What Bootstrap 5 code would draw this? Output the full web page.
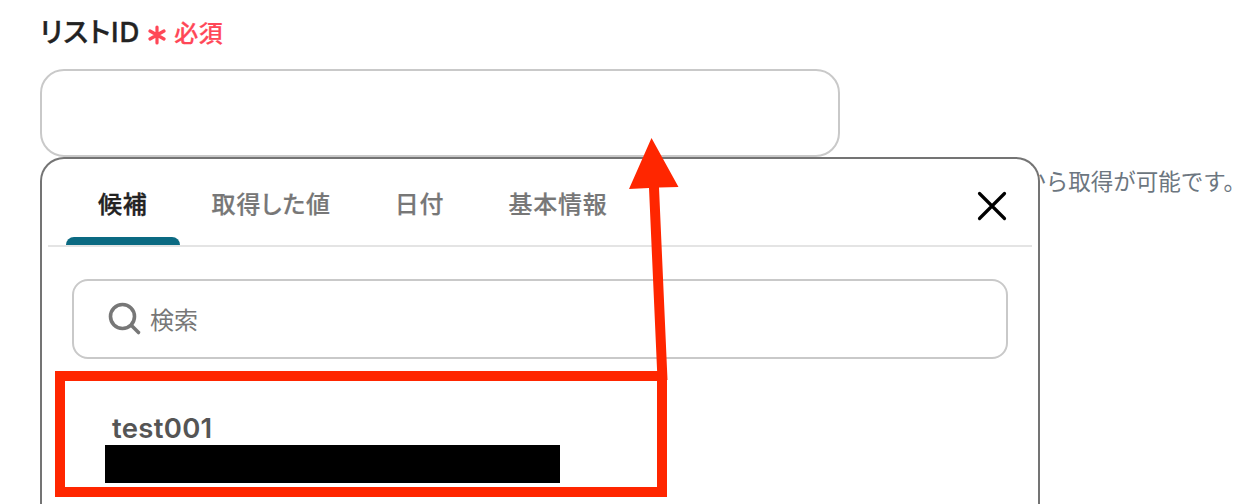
<!DOCTYPE html>
<html lang="ja">

<head>
    <meta charset="UTF-8">
    <meta name="viewport" content="width=device-width, initial-scale=1.0">
    <title>リストID</title>
    <link href="https://cdn.jsdelivr.net/npm/bootstrap@5.3.3/dist/css/bootstrap.min.css" rel="stylesheet">
    <style>
        body {
            height: 504px;
            overflow: hidden;
            background-color: #fff;
            color: #222;
            font-family: Inter, "Noto Sans CJK JP", sans-serif;
        }
        .field {
            padding: 12px 12px 0 40px;
        }
        .field-label {
            height: 57px;
            font-size: 27.5px;
            line-height: 41px;
            font-weight: 500;
            letter-spacing: 0.9px;
            font-feature-settings: "palt";
            -webkit-text-stroke: 0.4px currentColor;
        }
        .required {
            color: #ff4757;
            font-size: 24px;
            line-height: 43px;
            letter-spacing: 0.5px;
            margin-left: 8px;
            -webkit-text-stroke: 0.2px currentColor;
        }
        .list-input {
            width: 800px;
            height: 88px;
            border: 2px solid #c9c9c9;
            border-radius: 24px;
        }
        .list-input:focus {
            border-color: #c9c9c9;
            box-shadow: none;
        }
        .hint {
            margin-top: 8px;
            line-height: 33px;
            font-size: 22.5px;
            color: #6c7680;
        }
        .picker {
            top: 157px;
            left: 40px;
            width: 1000px;
            height: 347px;
            border: 2px solid #747474;
            border-bottom: 0;
            border-radius: 24px 24px 0 0;
        }
        .picker-head {
            height: 88px;
            margin: 0 6px;
            padding-left: 18px;
            border-bottom: 2px solid #e4e4e4;
        }
        .picker-tab {
            height: 86px;
            padding: 27px 32px 0;
            border: 0;
            background: none;
            color: #777;
            font-size: 24px;
            line-height: 38px;
            font-weight: 500;
            letter-spacing: 0.8px;
            font-feature-settings: "palt";
            text-align: left;
            white-space: nowrap;
            -webkit-text-stroke: 0.2px currentColor;
        }
        .picker-tab::after {
            content: "";
            display: block;
            height: 8px;
            margin: 13px -32px 0;
        }
        .picker-tab.current {
            color: #222;
            -webkit-text-stroke: 0.4px currentColor;
        }
        .picker-tab.current::after {
            border-radius: 8px 8px 0 0;
            background-color: #0b6a82;
        }
        .picker-close {
            margin: 31px 24px 0 0;
        }
        .search-box {
            height: 80px;
            margin: 32px 30px 0;
            padding-left: 34px;
            border: 2px solid #c9c9c9;
            border-radius: 16px;
            font-size: 24px;
            color: #777;
        }
        .search-text {
            padding-top: 3px;
        }
        .option {
            margin: 49px 0 0 63px;
        }
        .option-name {
            margin-left: 7px;
            height: 37px;
            font-size: 27.5px;
            line-height: 41px;
            font-weight: 600;
            letter-spacing: 0.3px;
            color: #555;
        }
        .option-mask {
            width: 455px;
            height: 38px;
            background-color: #000;
        }
        .frame {
            top: 371px;
            left: 55px;
            width: 612px;
            height: 126px;
            border: 10px solid #ff2600;
        }
    </style>
</head>

<body class="position-relative">
    <div class="field">
        <label class="field-label d-flex" for="listid">
            <span>リストID</span>
            <span class="required d-flex">
                <svg width="18" height="40" viewBox="0 0 18 40" fill="none" stroke="currentColor" stroke-width="3.2" stroke-linecap="round">
                    <path d="M9 15v16M2 19l14 8M2 27l14-8" />
                </svg>
                <span class="ms-2">必須</span>
            </span>
        </label>
        <input type="text" class="form-control list-input" id="listid">
        <div class="hint text-end">から取得が可能です。</div>
    </div>

    <div class="picker position-absolute bg-white">
        <div class="picker-head d-flex justify-content-between">
            <div class="d-flex">
                <button class="picker-tab current">候補</button>
                <button class="picker-tab">取得した値</button>
                <button class="picker-tab">日付</button>
                <button class="picker-tab">基本情報</button>
            </div>
            <svg class="picker-close" width="32" height="32" viewBox="0 0 32 32" fill="none" stroke="#000" stroke-width="3.2" stroke-linecap="round">
                <path d="M3.5 3.5l25 25M28.5 3.5l-25 25" />
            </svg>
        </div>
        <div class="search-box d-flex align-items-center">
            <svg width="34" height="34" viewBox="0 0 34 34" fill="none" stroke="currentColor" stroke-width="3.6" stroke-linecap="round">
                <circle cx="14.5" cy="14.5" r="12" />
                <path d="M23.5 23.5l7 7" />
            </svg>
            <span class="search-text ms-2">検索</span>
        </div>
        <div class="option">
            <div class="option-name">test001</div>
            <div class="option-mask"></div>
        </div>
    </div>

    <!-- highlight frame and the arrow to the input -->
    <div class="frame position-absolute"></div>
    <svg class="position-absolute top-0 start-0" width="1258" height="504" viewBox="0 0 1258 504" fill="#ff2600">
        <path d="M651.5 138L678.5 187L659 187.6L667.5 380L657.5 380L649 188L629 189z" />
    </svg>

    <script src="https://cdn.jsdelivr.net/npm/bootstrap@5.3.3/dist/js/bootstrap.bundle.min.js"></script>
</body>

</html>
